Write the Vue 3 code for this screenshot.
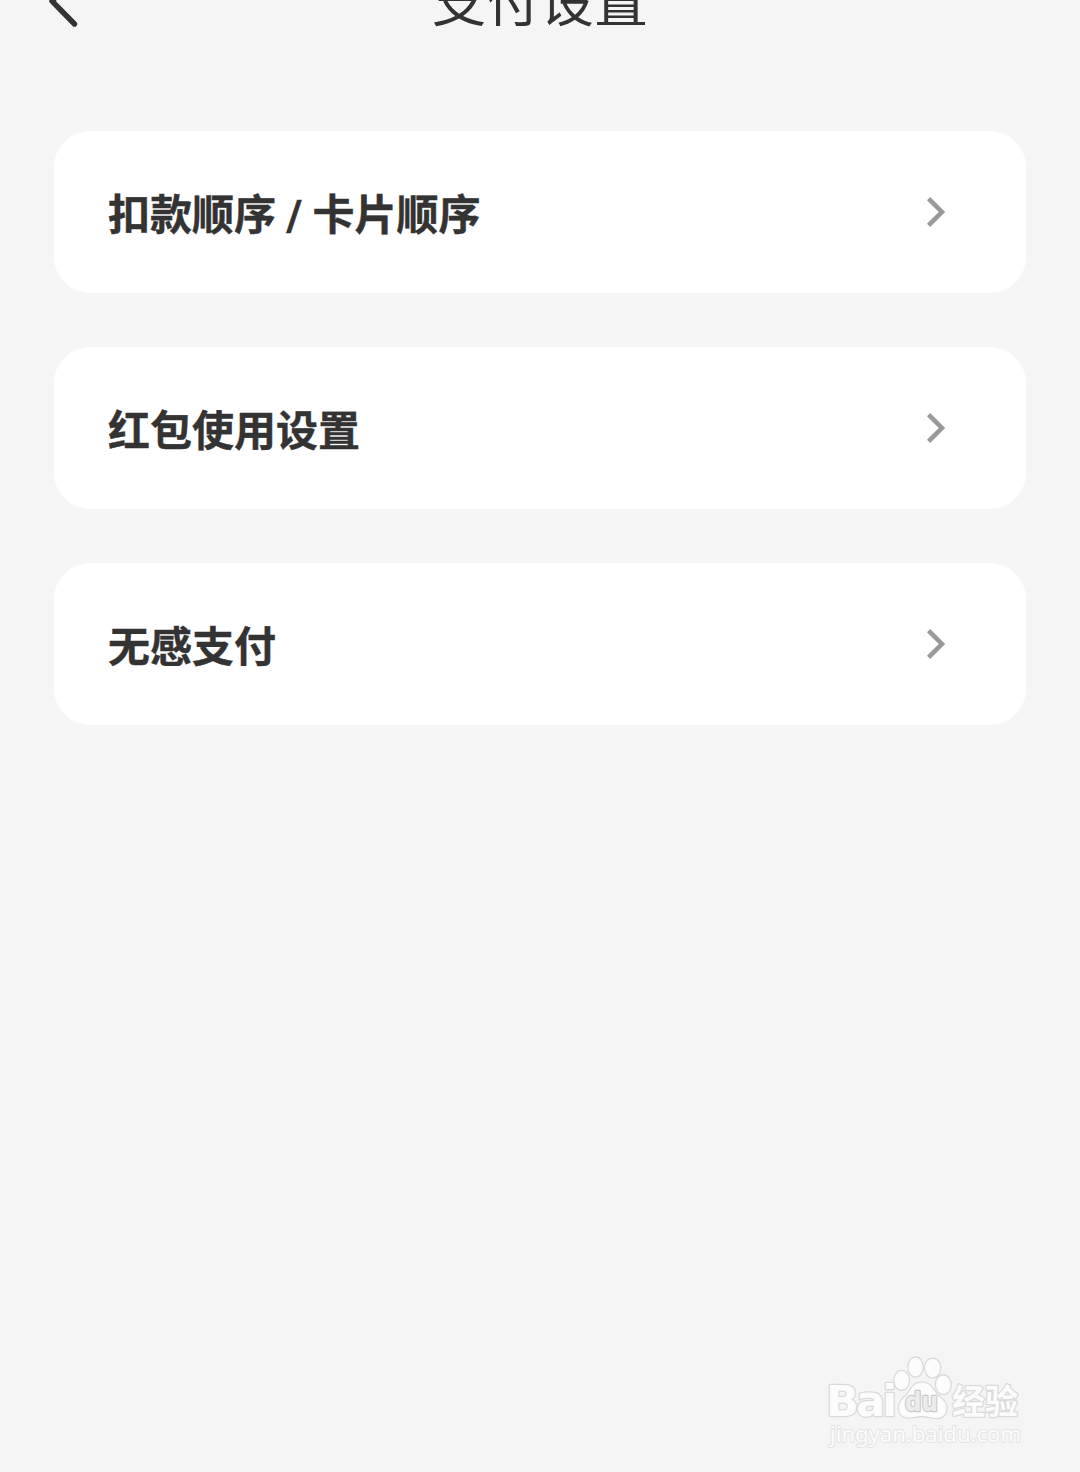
<template>
  <div class="page">
    <header class="header">
      <button
        class="back"
        type="button"
        aria-label="返回"
      >
        <svg
          width="40"
          height="64"
          viewBox="0 0 40 64"
        >
          <path d="M29.5 10L7 33L29.5 56" />
        </svg>
      </button>
      <h1 class="title">
        支付设置
      </h1>
    </header>

    <main class="list">
      <button
        v-for="item in items"
        :key="item"
        class="card"
        type="button"
      >
        <span class="card-label">{{ item }}</span>
        <svg
          class="card-arrow"
          width="24"
          height="36"
          viewBox="0 0 24 36"
        >
          <path d="M4.6 4.6L17.9 18L4.6 31.4" />
        </svg>
      </button>
    </main>

    <svg
      class="watermark"
      width="230"
      height="115"
      viewBox="0 0 230 115"
    >
      <g class="mark">
        <text
          class="brand"
          x="16"
          y="71"
          textLength="68"
          lengthAdjust="spacingAndGlyphs"
        >Bai</text>
        <ellipse cx="91.7" cy="35.3" rx="7.3" ry="9.3" />
        <ellipse cx="105.5" cy="22" rx="7" ry="9.5" />
        <ellipse cx="122.6" cy="23" rx="7.5" ry="9.3" />
        <ellipse cx="133.3" cy="39.7" rx="7.3" ry="9.3" />
        <path d="M112 37.5C105 37.5 102 42 99 47C95 53 89 55 89 63C89 69 93 72.5 98 72.5C104 72.5 107 71 112 71C117 71 121 73 127 73C133 73 136.5 69 136.5 62C136.5 56 129 53 125 47C121 41 118 37.5 112 37.5Z" />
        <text
          class="du"
          x="95"
          y="66"
          textLength="33"
          lengthAdjust="spacingAndGlyphs"
        >du</text>
        <text
          class="brand-cn"
          x="142"
          y="69"
          textLength="66"
          lengthAdjust="spacingAndGlyphs"
        >经验</text>
        <text
          class="site"
          x="20"
          y="97"
          textLength="191"
          lengthAdjust="spacingAndGlyphs"
        >jingyan.baidu.com</text>
      </g>
    </svg>
  </div>
</template>

<script setup>
const items = ['扣款顺序 / 卡片顺序', '红包使用设置', '无感支付'];
</script>

<style>
body {
  background-color: #f5f5f5;
}
</style>

<style scoped>
.page {
  box-sizing: border-box;
  position: relative;
  height: 1472px;
  overflow: hidden;
  background-color: #f5f5f5;
  color: #333;
  font-family: Roboto, "Noto Sans CJK SC", sans-serif;
}

/* the bar is scrolled halfway out of view */
.header {
  display: grid;
  grid-template-columns: 108px 1fr 108px;
  align-items: center;
  height: 132px;
  margin-top: -66px;
}

.back {
  display: flex;
  padding: 0 0 0 45px;
  border: 0;
  background: none;
}

.back path {
  fill: none;
  stroke: #333;
  stroke-width: 5.4;
  stroke-linecap: round;
  stroke-linejoin: round;
}

.title {
  margin: 0;
  padding-top: 8px;
  font-size: 54px;
  font-weight: 400;
  line-height: 80px;
  text-align: center;
}

.list {
  display: flex;
  flex-direction: column;
  gap: 54px;
  padding: 65px 54px 0;
}

.card {
  display: flex;
  align-items: center;
  justify-content: space-between;
  height: 162px;
  padding: 0 78px 0 54px;
  border: 0;
  border-radius: 36px;
  background-color: #fff;
  color: #333;
  font-family: inherit;
}

.card-label {
  padding-top: 7px;
  font-size: 42px;
  font-weight: 700;
  line-height: 60px;
  -webkit-text-stroke: 0.4px #333;
}

.card-arrow path {
  fill: none;
  stroke: #999;
  stroke-width: 4.6;
  stroke-linecap: butt;
}

.watermark {
  position: absolute;
  right: 40px;
  bottom: 12px;
}

.mark {
  fill: #fcfcfc;
  stroke: #dadada;
  stroke-width: 2.6;
  stroke-linejoin: round;
  paint-order: stroke;
}

.brand {
  font-family: "DejaVu Sans", sans-serif;
  font-size: 43px;
  font-weight: 700;
  letter-spacing: -3px;
}

.du {
  fill: #ececec;
  stroke: #cacaca;
  font-family: "DejaVu Sans", sans-serif;
  font-size: 26px;
  font-weight: 700;
}

.brand-cn {
  font-family: "Noto Sans CJK SC", sans-serif;
  font-size: 34px;
  font-weight: 700;
}

.site {
  stroke: #e4e4e4;
  stroke-width: 2;
  font-family: "Noto Sans", sans-serif;
  font-size: 22px;
}
</style>
